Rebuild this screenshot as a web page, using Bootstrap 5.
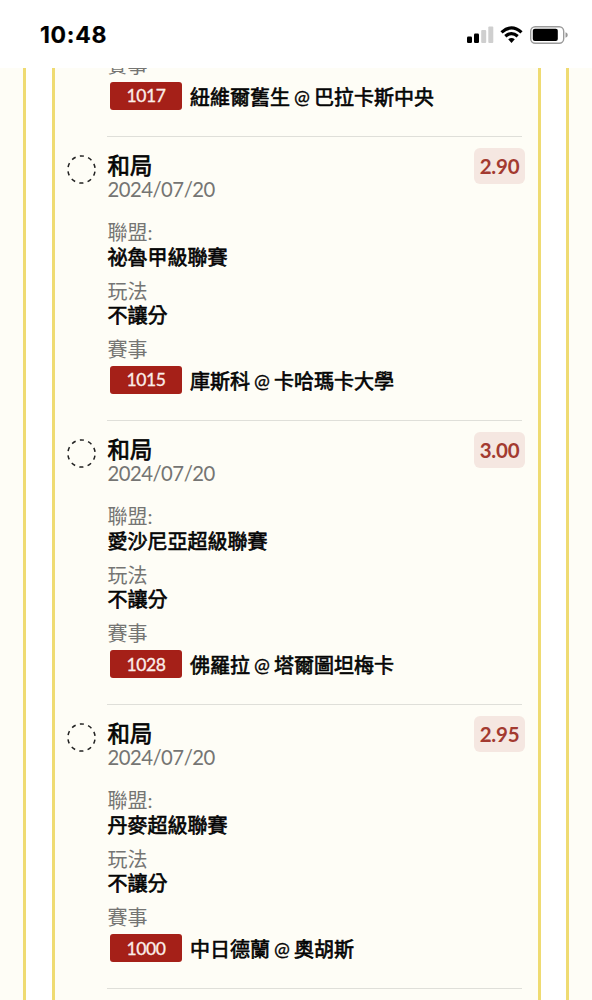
<!DOCTYPE html>
<html lang="zh-Hant">
<head>
<meta charset="utf-8">
<meta name="viewport" content="width=device-width, initial-scale=1">
<title>投注單</title>
<link href="https://cdn.jsdelivr.net/npm/bootstrap@5.3.0/dist/css/bootstrap.min.css" rel="stylesheet">
<style>
  body { font-family: Lato, "Noto Sans CJK TC", sans-serif; font-size: 20px; color: #050505; background: #fff; }
  .status-bar { height: 68px; padding: 1px 24px 0 40px; }
  .clock { font: 700 23px/30px Inter, sans-serif; letter-spacing: .7px; color: #000; padding-top: 1px; -webkit-text-stroke: .2px; }
  .status-bar svg { display: block; }
  .page { height: 932px; }
  .rail { background: #fefdf6; flex: none; }
  .rail-left { width: 26px; border-right: 3px solid #efdb72; }
  .rail-right { width: 26px; border-left: 3px solid #efdb72; }
  .slip { width: 489px; margin: 0 25.5px; background: #fefdf6; border: solid #efdb72; border-width: 0 3px; padding: 0 15.5px 0 12px; }
  .bet { height: 284.15px; }
  .bet-tail { height: 68px; }
  .pick { width: 29px; height: 29px; margin-top: 19px; }
  .pick circle { fill: none; stroke: #222; stroke-width: 1.5; stroke-dasharray: 4.2 4.345; stroke-dashoffset: 6.37; }
  .details { width: 415px; flex: none; }
  .bet .details { border-top: 1px solid #dfdfd9; padding-top: 16px; }
  .rule { height: 1px; background: #dfdfd9; }
  .line { line-height: 24.5px; height: 24.5px; white-space: nowrap; padding-left: .4px; }
  .outcome { font-size: 22.4px; line-height: 26px; height: 26px; -webkit-text-stroke: .75px; padding-left: .6px; }
  .day { line-height: 24px; height: 24px; color: #757573; margin-top: -2px; margin-bottom: 19px; font-size: 20.3px; letter-spacing: -.5px; padding-left: .4px; }
  .tag-name { color: #757573; }
  .tag-value { -webkit-text-stroke: .65px; margin-bottom: 9.5px; }
  .odds { width: 51px; height: 36px; margin: -5px -3px 0 0; border-radius: 6px; background: #f5e7e1; color: #a33a30; font-size: 20.5px; font-weight: 700; letter-spacing: -.2px; }
  .match { height: 28px; padding-left: 3px; margin-top: 4.5px; gap: 8px; }
  .bet-tail .match { margin-bottom: 26px; }
  .code { width: 72px; height: 28px; border-radius: 3px; background: #a52018; color: #fbeeea; font-size: 17.5px; letter-spacing: -.45px; -webkit-text-stroke: .3px; padding-top: 1px; }
  .teams { -webkit-text-stroke: .65px; line-height: 28px; white-space: nowrap; padding-top: 1px; }
  .teams span { font-size: 19px; margin: 0 4px; -webkit-text-stroke: .3px; vertical-align: 1px; line-height: 1; }
</style>
</head>
<body class="overflow-hidden">
<header class="status-bar d-flex align-items-center justify-content-between">
  <div class="clock">10:48</div>
  <svg width="102" height="18" viewBox="0 0 102 18" aria-hidden="true">
    <g fill="#000"><rect x="1" y="10.5" width="5" height="6.5" rx="1.2"/><rect x="8" y="7.5" width="5" height="9.5" rx="1.2"/></g>
    <g fill="#cfcfcf"><rect x="15.2" y="4" width="5" height="13" rx="1"/><rect x="22.3" y="0.5" width="5" height="16.5" rx="1"/></g>
    <g fill="none" stroke="#000" stroke-width="3.2"><path d="M35.500 6.400Q45.500 -2.600 55.500 6.400"/><path d="M39.300 10.300Q45.500 4.900 51.700 10.300"/></g>
    <path d="M42.200 13.300Q45.500 10.600 48.800 13.300L45.500 17Z" fill="#000"/>
    <rect x="64.7" y="0.7" width="33" height="16.6" rx="4.5" fill="none" stroke="#9b9b9b" stroke-width="1.4"/>
    <rect x="66.8" y="2.7" width="25" height="12.4" rx="2" fill="#000"/>
    <path d="M99.500 6.300Q101.800 7 101.800 9T99.500 11.700Z" fill="#999"/>
  </svg>
</header>

<main class="page d-flex overflow-hidden">
  <div class="rail rail-left"></div>
  <section class="slip flex-shrink-0 overflow-hidden">
    <article class="bet-tail d-flex justify-content-end overflow-hidden">
      <div class="details d-flex flex-column justify-content-end">
        <div class="line tag-name">賽事</div>
        <div class="match d-flex align-items-center flex-shrink-0"><div class="code d-flex align-items-center justify-content-center">1017</div><div class="teams">紐維爾舊生<span>@</span>巴拉卡斯中央</div></div>
      </div>
    </article>

    <article class="bet d-flex justify-content-between">
      <svg class="pick" viewBox="0 0 29 29"><circle cx="14.5" cy="14.5" r="13.6"/></svg>
      <div class="details">
        <div class="d-flex justify-content-between"><div><div class="outcome">和局</div><div class="day">2024/07/20</div></div><div class="odds d-flex align-items-center justify-content-center">2.90</div></div>
        <div class="line tag-name">聯盟:</div><div class="line tag-value">祕魯甲級聯賽</div>
        <div class="line tag-name">玩法</div><div class="line tag-value">不讓分</div>
        <div class="line tag-name">賽事</div>
        <div class="match d-flex align-items-center"><div class="code d-flex align-items-center justify-content-center">1015</div><div class="teams">庫斯科<span>@</span>卡哈瑪卡大學</div></div>
      </div>
    </article>

    <article class="bet d-flex justify-content-between">
      <svg class="pick" viewBox="0 0 29 29"><circle cx="14.5" cy="14.5" r="13.6"/></svg>
      <div class="details">
        <div class="d-flex justify-content-between"><div><div class="outcome">和局</div><div class="day">2024/07/20</div></div><div class="odds d-flex align-items-center justify-content-center">3.00</div></div>
        <div class="line tag-name">聯盟:</div><div class="line tag-value">愛沙尼亞超級聯賽</div>
        <div class="line tag-name">玩法</div><div class="line tag-value">不讓分</div>
        <div class="line tag-name">賽事</div>
        <div class="match d-flex align-items-center"><div class="code d-flex align-items-center justify-content-center">1028</div><div class="teams">佛羅拉<span>@</span>塔爾圖坦梅卡</div></div>
      </div>
    </article>

    <article class="bet d-flex justify-content-between">
      <svg class="pick" viewBox="0 0 29 29"><circle cx="14.5" cy="14.5" r="13.6"/></svg>
      <div class="details">
        <div class="d-flex justify-content-between"><div><div class="outcome">和局</div><div class="day">2024/07/20</div></div><div class="odds d-flex align-items-center justify-content-center">2.95</div></div>
        <div class="line tag-name">聯盟:</div><div class="line tag-value">丹麥超級聯賽</div>
        <div class="line tag-name">玩法</div><div class="line tag-value">不讓分</div>
        <div class="line tag-name">賽事</div>
        <div class="match d-flex align-items-center"><div class="code d-flex align-items-center justify-content-center">1000</div><div class="teams">中日德蘭<span>@</span>奧胡斯</div></div>
      </div>
    </article>
    <div class="d-flex justify-content-end"><div class="details rule"></div></div>
  </section>
  <div class="rail rail-right flex-grow-1"></div>
</main>
<script src="https://cdn.jsdelivr.net/npm/bootstrap@5.3.0/dist/js/bootstrap.bundle.min.js"></script>
</body>
</html>
